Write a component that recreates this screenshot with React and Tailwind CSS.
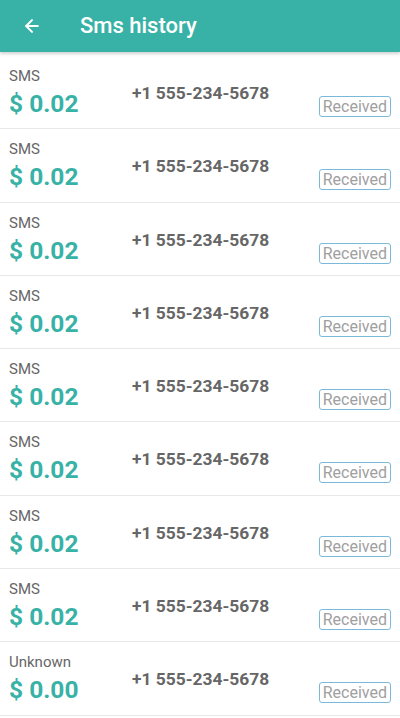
import { ArrowLeft } from "lucide-react";

const rows = [
  { type: "SMS", cost: "0.02" },
  { type: "SMS", cost: "0.02" },
  { type: "SMS", cost: "0.02" },
  { type: "SMS", cost: "0.02" },
  { type: "SMS", cost: "0.02" },
  { type: "SMS", cost: "0.02" },
  { type: "SMS", cost: "0.02" },
  { type: "SMS", cost: "0.02" },
  { type: "Unknown", cost: "0.00" },
];

export default function App() {
  return (
    <div className="w-[400px] h-[718px] overflow-hidden bg-white font-['Roboto',sans-serif]">
      {/* Toolbar */}
      <div className="relative z-10 h-[52px] bg-[#38b2a6] flex items-center shadow-[0_2px_3px_rgba(0,0,0,0.18)]">
        <div className="w-[80px] pl-[22px]">
          <ArrowLeft className="w-[20px] h-[20px] text-white" strokeWidth={2.4} />
        </div>
        <h1 className="text-white text-[22px] font-medium leading-none">Sms history</h1>
      </div>

      {/* History list */}
      <div className="pt-[4px]">
        {rows.map((row, i) => (
          <div
            key={i}
            className="h-[73.3px] border-b border-[#e8e8e8] flex"
          >
            <div className="w-[132px] pl-[9px] pt-[10px]">
              <p className="text-[15px] leading-[20px] text-[#666]">{row.type}</p>
              <p className="mt-[3px] text-[24.5px] leading-[30px] font-bold text-[#38b2a6]">$ {row.cost}</p>
            </div>
            <div className="flex-1 pt-[25px]">
              <p className="text-[17.4px] leading-[24px] font-bold text-[#666]">+1 555-234-5678</p>
            </div>
            <div className="pr-[9px] pt-[40px]">
              <span className="block border border-[#7ab9d9] rounded-[3px] px-[3px] text-[16px] leading-[19px] text-[#a0a0a0]">
                Received
              </span>
            </div>
          </div>
        ))}
      </div>
    </div>
  );
}
